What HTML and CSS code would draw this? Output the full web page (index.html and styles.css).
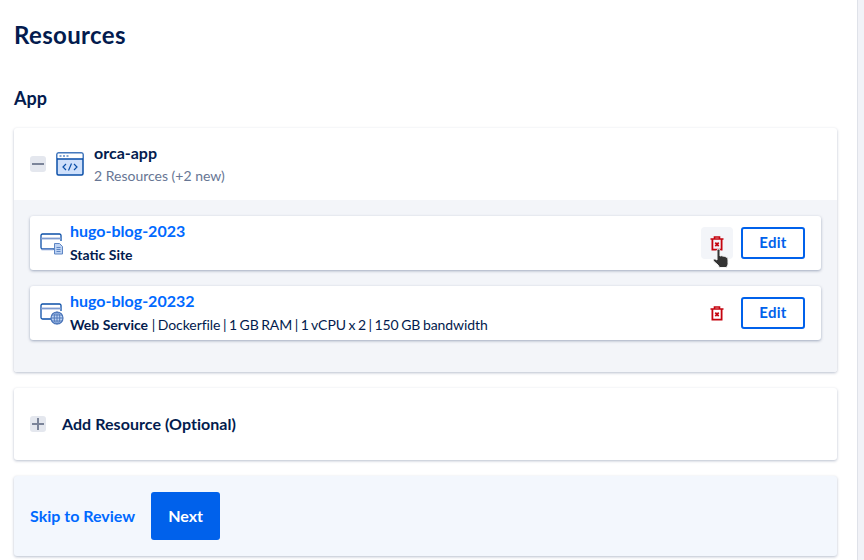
FILE: index.html
```html
<!DOCTYPE html>
<html lang="en">
<head>
<meta charset="utf-8">
<title>Resources</title>
<link rel="stylesheet" href="styles.css">
</head>
<body>
<main class="page">
  <h1 class="title">Resources</h1>
  <h2 class="subtitle">App</h2>
  <section class="card">
    <div class="app-head">
      <span class="toggle"><svg width="12" height="12" viewBox="0 0 12 12"><path d="M0 6h12" stroke="#7b8499" stroke-width="2"/></svg></span>
      <svg class="app-icon" width="28" height="24" viewBox="0 0 28 24" fill="none">
        <rect x="1" y="1" width="26" height="22" rx="1.5" fill="#cfe0fb" stroke="#0b4fa8" stroke-width="1.5"/>
        <rect x="1.5" y="1.5" width="25" height="5" fill="#fff"/>
        <path d="M1 7h26" stroke="#0b4fa8" stroke-width="1.5"/>
        <path d="M3.5 4h2M7 4h2M10.5 4h2" stroke="#0b4fa8" stroke-width="1"/>
        <path d="M10 12l-3 3 3 3M18 12l3 3-3 3M15.500 11.500l-3 7" stroke="#0b4fa8" stroke-width="1.200"/>
      </svg>
      <div class="app-text">
        <div class="app-name">orca-app</div>
        <div class="app-meta">2 Resources (+2 new)</div>
      </div>
    </div>
    <div class="res-panel">
      <article class="res">
        <svg class="res-icon" width="24" height="22" viewBox="0 0 24 22" fill="none">
          <path d="M21 8V2.500A1.500 1.500 0 0 0 19.500 1h-17A1.500 1.500 0 0 0 1 2.500v12A1.500 1.500 0 0 0 2.500 16H14" stroke="#0b4fa8" stroke-width="1.300"/>
          <path d="M1 5.500h20" stroke="#7d9ad0" stroke-width="1.800"/>
          <path d="M1.500 16.500h12" stroke="#7d9ad0" stroke-width="1.500"/>
          <path d="M14.500 10.500h5l3 3v7.500h-8z" fill="#bcd2f3" stroke="#5f86c4"/>
          <path d="M16.500 14.500h4M16.500 16.500h4M16.500 18.500h4" stroke="#5f86c4"/>
        </svg>
        <div class="res-text">
          <a class="res-name">hugo-blog-2023</a>
          <div class="res-meta"><b>Static Site</b></div>
        </div>
        <span class="del del-hover">
          <svg width="14" height="15" viewBox="0 0 14 15" fill="none"><use href="#trash"/></svg>
        </span>
        <button class="edit">Edit</button>
        <svg class="cursor" width="18" height="21" viewBox="0 0 18 21"><path d="M5 2.300c0-1.600 3-1.600 3 0V8l1.500-.3 1.300.4 1.400.1 1.300.5 1.300.6c.9.600 1.200 1.500 1.200 2.700v3.500c0 1.600-.8 3-1.800 4H7.500L6 17 2 13.500c-1.300-1.300-.2-3 1.500-2.300L5 12z" fill="#333" stroke="#f4f4f4" stroke-width="1"/></svg>
      </article>
      <article class="res">
        <svg class="res-icon" width="24" height="22" viewBox="0 0 24 22" fill="none">
          <path d="M21 8V2.500A1.500 1.500 0 0 0 19.500 1h-17A1.500 1.500 0 0 0 1 2.500v12A1.500 1.500 0 0 0 2.500 16H11" stroke="#0b4fa8" stroke-width="1.300"/>
          <path d="M1 5.500h20" stroke="#7d9ad0" stroke-width="1.800"/>
          <circle cx="17" cy="15" r="6" fill="#bcd2f3" stroke="#4a74b8" stroke-width="1.200"/>
          <path d="M11 15h12M12 12h10M12 18h10M17 9v12" stroke="#4a74b8" stroke-width=".9"/>
          <ellipse cx="17" cy="15" rx="2.800" ry="6" stroke="#4a74b8" stroke-width=".9"/>
        </svg>
        <div class="res-text">
          <a class="res-name">hugo-blog-20232</a>
          <div class="res-meta"><b>Web Service</b> <span class="specs">| Dockerfile | 1 GB RAM | 1 vCPU x 2 | 150 GB bandwidth</span></div>
        </div>
        <span class="del">
          <svg width="14" height="15" viewBox="0 0 14 15" fill="none"><use href="#trash"/></svg>
        </span>
        <button class="edit">Edit</button>
      </article>
    </div>
  </section>
  <section class="card add">
    <span class="toggle"><svg width="12" height="12" viewBox="0 0 12 12"><path d="M0 6h12M6 0v12" stroke="#7b8499" stroke-width="2"/></svg></span>
    <span class="add-label">Add Resource (Optional)</span>
  </section>
  <section class="card footer">
    <a class="skip">Skip to Review</a>
    <button class="next">Next</button>
  </section>
</main>
<svg class="defs" width="0" height="0">
  <defs>
    <g id="trash">
      <path d="M0.500 3h13M4.500 3V1h5v2" stroke="#c5040f" stroke-width="1.600"/>
      <path d="M2.400 3v10.600h9.200V3" stroke="#c5040f" stroke-width="1.800"/>
      <path d="M5.300 6.600l3.400 3.600M8.700 6.600l-3.400 3.600" stroke="#c5040f" stroke-width="1.700"/>
    </g>
  </defs>
</svg>
</body>
</html>
```
FILE: styles.css
```css
* { box-sizing: border-box; }
html, body { margin: 0; height: 560px; overflow: hidden; }
body {
  background: #f1f2f7;
  font-family: "Lato", "Liberation Sans", sans-serif;
  color: #031b4e;
}
.page {
  width: 858px;
  height: 560px;
  background: #fff;
  padding: 20px 20px 0 14px;
  border-right: 1px solid #dfe2e9;
}
.title { margin: 0; font-size: 24px; line-height: 30px; font-weight: 700; letter-spacing: .35px; }
.subtitle { margin: 36px 0 0; font-size: 18px; line-height: 24px; font-weight: 700; }
.card {
  background: #fff;
  border-radius: 3px;
  box-shadow: 0 1px 3px rgba(3, 27, 78, .28);
  width: 823px;
  margin-bottom: 16px;
}
.page .card:first-of-type { margin-top: 18px; }
.app-head { height: 72px; padding: 0 16px; display: flex; align-items: center; }
.toggle {
  width: 16px; height: 16px; border-radius: 3px; background: #e4e7ee;
  display: flex; align-items: center; justify-content: center; flex: none;
}
.app-icon { margin-left: 10px; flex: none; }
.app-text { margin-left: 10px; }
.app-name { font-size: 16px; line-height: 20px; font-weight: 700; }
.app-meta { font-size: 14px; line-height: 20px; color: #677694; margin-top: 3px; }
.res-panel { background: #f3f5f9; padding: 16px 16px 32px; height: 172px; border-radius: 0 0 3px 3px; display: flex; flex-direction: column; gap: 16px; }
.res {
  position: relative;
  height: 54px; background: #fff; border-radius: 3px;
  box-shadow: 0 1px 3px rgba(3, 27, 78, .35);
  display: flex; align-items: center; padding: 0 16px 0 10px;
}
.res-icon { flex: none; margin-top: 2px; }
.res-text { margin-left: 6px; flex: 1; margin-top: -3px; }
.res-name { display: block; font-size: 16px; line-height: 22px; font-weight: 700; color: #0069ff; }
.res-meta { font-size: 14px; line-height: 18px; margin-top: 4px; }
.res-meta b { font-weight: 700; }
.specs { word-spacing: -1px; letter-spacing: -.06px; }
.del {
  width: 32px; height: 32px; border-radius: 4px; display: flex;
  align-items: center; justify-content: center; margin-right: 8px;
}
.del-hover { background: #f3f5f9; }
.edit {
  width: 64px; height: 32px; background: #fff; border: 2px solid #0061eb;
  border-radius: 3px; color: #0061eb; font: 700 15px/1 "Lato", "Liberation Sans", sans-serif; letter-spacing: .3px; padding: 0 0 2px;
}
.cursor { position: absolute; left: 682px; top: 32px; }
.add { height: 72px; display: flex; align-items: center; padding: 0 16px; }
.add-label { margin-left: 16px; font-size: 16px; font-weight: 700; letter-spacing: .05px; position: relative; top: -1px; }
.footer {
  height: 80px; background: #f3f7fd; display: flex; align-items: center; padding: 0 16px; margin: 0;
}
.skip { font-size: 16px; font-weight: 700; color: #0069ff; position: relative; top: -1px; }
.next {
  margin-left: 16px; width: 69px; height: 48px; border: 0; border-radius: 3px;
  background: #0061eb; color: #fff; font: 700 16px/1 "Lato", "Liberation Sans", sans-serif; padding: 0;
}
.defs { position: absolute; }
```
